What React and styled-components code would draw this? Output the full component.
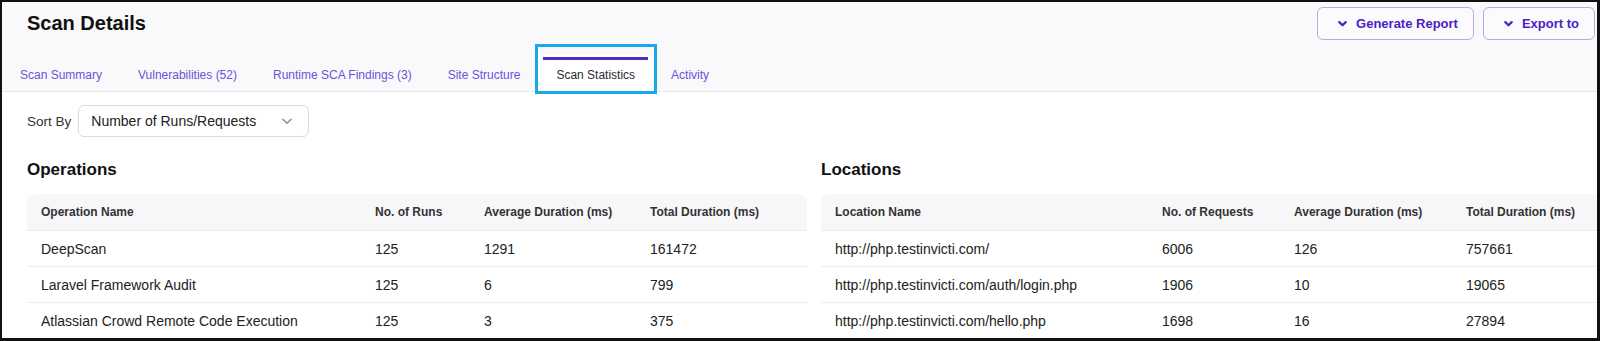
import React from "react";
import styled, { createGlobalStyle } from "styled-components";

const GlobalStyle = createGlobalStyle`
  html, body { margin: 0; padding: 0; background: #fff; }
  body { font-family: "Liberation Sans", Arial, sans-serif; }
  * { box-sizing: border-box; }
`;

const Frame = styled.div`
  width: 1600px;
  height: 341px;
  border-style: solid;
  border-color: #111;
  border-width: 2px 3px 3px 2px;
  overflow: hidden;
  background: #fff;
`;

const Header = styled.header`
  background: #f9f9fb;
  border-bottom: 1px solid #e7e7ec;
`;

const TitleBar = styled.div`
  display: flex;
  justify-content: space-between;
  align-items: flex-start;
  height: 53px;
  padding: 5px 2px 0 25px;
`;

const Title = styled.h1`
  margin: 0;
  font-size: 20px;
  line-height: 33px;
  font-weight: 700;
  color: #111;
`;

const Actions = styled.div`
  display: flex;
  gap: 9px;
`;

const ActionButton = styled.button`
  display: flex;
  align-items: center;
  gap: 8px;
  height: 33px;
  padding: 0 15px 0 19px;
  border: 1px solid #b8aae8;
  border-radius: 6px;
  background: #fbfbfe;
  color: #4a22c4;
  font-family: inherit;
  font-size: 13px;
  font-weight: 700;
  cursor: pointer;
`;

const TabBar = styled.nav`
  display: flex;
  height: 36px;
`;

const Tab = styled.div`
  position: relative;
  display: flex;
  align-items: center;
  padding: 4px 18px 0;
  font-size: 12px;
  color: ${(p) => (p.$active ? "#2b2b33" : "#6e52d8")};
  background: ${(p) => (p.$active ? "#fff" : "transparent")};
  &::before {
    content: "";
    display: ${(p) => (p.$active ? "block" : "none")};
    position: absolute;
    top: 2px;
    left: 5px;
    right: 5px;
    height: 3px;
    background: #5429c4;
  }
`;

const Highlight = styled.span`
  position: absolute;
  top: -11px;
  left: -3px;
  right: -4px;
  bottom: -3px;
  border: 3px solid #18a9e8;
  pointer-events: none;
`;

const Content = styled.main`
  padding: 13px 0 0 25px;
`;

const SortRow = styled.div`
  display: flex;
  align-items: center;
  gap: 7px;
`;

const SortLabel = styled.span`
  font-size: 13.5px;
  color: #333;
`;

const Select = styled.div`
  display: flex;
  align-items: center;
  justify-content: space-between;
  width: 231px;
  height: 32px;
  padding: 0 14px 0 12px;
  border: 1px solid #dadae0;
  border-radius: 6px;
  background: #fff;
  font-size: 14px;
  color: #222;
`;

const Columns = styled.div`
  display: grid;
  grid-template-columns: 780px 780px;
  gap: 14px;
  margin-top: 23px;
`;

const SectionTitle = styled.h2`
  margin: 0 0 14px;
  font-size: 17px;
  line-height: 20px;
  font-weight: 700;
  color: #111;
`;

const Table = styled.table`
  width: 100%;
  border-collapse: separate;
  border-spacing: 0;
  table-layout: fixed;
`;

const Th = styled.th`
  height: 37px;
  padding: 0 0 0 ${(p) => (p.$first ? "14px" : "0")};
  background: #f7f7fa;
  text-align: left;
  font-size: 12px;
  font-weight: 700;
  color: #333;
  border-bottom: 1px solid #e9e9ee;
  &:first-child { border-top-left-radius: 8px; }
  &:last-child { border-top-right-radius: 8px; }
`;

const Td = styled.td`
  height: 36px;
  padding: 0 0 0 ${(p) => (p.$first ? "14px" : "0")};
  font-size: 14px;
  color: #222;
  border-bottom: 1px solid #ececf0;
  white-space: nowrap;
`;

const Chevron = ({ size = 12, stroke = "currentColor", width = 2.4 }) => (
  <svg width={size} height={size} viewBox="0 0 12 12" fill="none">
    <path d="M2.5 4.5 6 8l3.5-3.5" stroke={stroke} strokeWidth={width} strokeLinecap="round" strokeLinejoin="round" />
  </svg>
);

const operations = [
  ["DeepScan", "125", "1291", "161472"],
  ["Laravel Framework Audit", "125", "6", "799"],
  ["Atlassian Crowd Remote Code Execution", "125", "3", "375"],
];

const locations = [
  ["http://php.testinvicti.com/", "6006", "126", "757661"],
  ["http://php.testinvicti.com/auth/login.php", "1906", "10", "19065"],
  ["http://php.testinvicti.com/hello.php", "1698", "16", "27894"],
];

const StatsTable = ({ title, headers, widths, rows }) => (
  <section>
    <SectionTitle>{title}</SectionTitle>
    <Table>
      <colgroup>
        {widths.map((w, i) => (
          <col key={i} style={w ? { width: w } : undefined} />
        ))}
      </colgroup>
      <thead>
        <tr>
          {headers.map((h, i) => (
            <Th key={h} $first={i === 0}>{h}</Th>
          ))}
        </tr>
      </thead>
      <tbody>
        {rows.map((r) => (
          <tr key={r[0]}>
            {r.map((c, i) => (
              <Td key={i} $first={i === 0}>{c}</Td>
            ))}
          </tr>
        ))}
      </tbody>
    </Table>
  </section>
);

const tabs = [
  "Scan Summary",
  "Vulnerabilities (52)",
  "Runtime SCA Findings (3)",
  "Site Structure",
  "Scan Statistics",
  "Activity",
];

export default function App() {
  return (
    <>
      <GlobalStyle />
      <Frame>
        <Header>
          <TitleBar>
            <Title>Scan Details</Title>
            <Actions>
              <ActionButton>
                <Chevron size={11} />
                Generate Report
              </ActionButton>
              <ActionButton>
                <Chevron size={11} />
                Export to
              </ActionButton>
            </Actions>
          </TitleBar>
          <TabBar>
            {tabs.map((t) => (
              <Tab key={t} $active={t === "Scan Statistics"}>
                {t}
                {t === "Scan Statistics" && <Highlight />}
              </Tab>
            ))}
          </TabBar>
        </Header>
        <Content>
          <SortRow>
            <SortLabel>Sort By</SortLabel>
            <Select>
              Number of Runs/Requests
              <Chevron size={14} stroke="#8a8a94" width={1.2} />
            </Select>
          </SortRow>
          <Columns>
            <StatsTable
              title="Operations"
              headers={["Operation Name", "No. of Runs", "Average Duration (ms)", "Total Duration (ms)"]}
              widths={["348px", "109px", "166px", null]}
              rows={operations}
            />
            <StatsTable
              title="Locations"
              headers={["Location Name", "No. of Requests", "Average Duration (ms)", "Total Duration (ms)"]}
              widths={["341px", "132px", "172px", null]}
              rows={locations}
            />
          </Columns>
        </Content>
      </Frame>
    </>
  );
}
